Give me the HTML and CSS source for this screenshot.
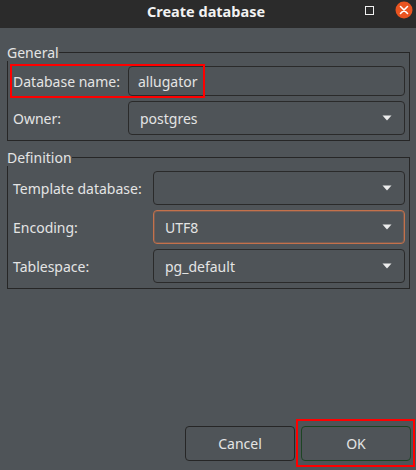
FILE: index.html
```html
<!DOCTYPE html>
<html>
<head>
<meta charset="utf-8">
<link rel="stylesheet" href="styles.css">
</head>
<body>
<div class="window">
  <header class="titlebar">
    <span class="title">Create database</span>
    <div class="controls">
      <span class="maximize"></span>
      <span class="close">
        <svg width="18" height="18" viewBox="0 0 18 18"><circle cx="9" cy="9" r="8.5" fill="#e95420"/><path d="M5.5 5.5 L12.5 12.5 M12.5 5.5 L5.5 12.5" stroke="#fff" stroke-width="1.6" stroke-linecap="round"/></svg>
      </span>
    </div>
  </header>
  <main class="content">
    <fieldset class="group general">
      <legend>General</legend>
      <div class="grid">
        <label class="lbl">Database name:</label>
        <div class="entry">allugator</div>
        <label class="lbl">Owner:</label>
        <div class="combo"><span>postgres</span><svg class="arrow" width="10" height="6" viewBox="0 0 10 6"><path d="M0.5 0.5 H9.5 L5 5.5 Z" fill="#ececec"/></svg></div>
      </div>
    </fieldset>
    <fieldset class="group definition">
      <legend>Definition</legend>
      <div class="grid">
        <label class="lbl">Template database:</label>
        <div class="combo"><span></span><svg class="arrow" width="10" height="6" viewBox="0 0 10 6"><path d="M0.5 0.5 H9.5 L5 5.5 Z" fill="#ececec"/></svg></div>
        <label class="lbl">Encoding:</label>
        <div class="combo focused"><span>UTF8</span><svg class="arrow" width="10" height="6" viewBox="0 0 10 6"><path d="M0.5 0.5 H9.5 L5 5.5 Z" fill="#ececec"/></svg></div>
        <label class="lbl">Tablespace:</label>
        <div class="combo"><span>pg_default</span><svg class="arrow" width="10" height="6" viewBox="0 0 10 6"><path d="M0.5 0.5 H9.5 L5 5.5 Z" fill="#ececec"/></svg></div>
      </div>
    </fieldset>
  </main>
  <footer class="buttons">
    <button class="btn">Cancel</button>
    <button class="btn ok">OK</button>
  </footer>
  <div class="mark mark-name"></div>
  <div class="mark mark-ok"></div>
</div>
</body>
</html>
```

FILE: styles.css
```css
* { box-sizing: border-box; }
html, body { margin: 0; padding: 0; }
body {
  width: 416px;
  height: 470px;
  overflow: hidden;
  background: #4f5458;
  font-family: "Noto Sans", "DejaVu Sans", sans-serif;
  font-size: 14px;
  color: #e4e4e4;
}
.window {
  position: relative;
  width: 416px;
  height: 470px;
  display: flex;
  flex-direction: column;
}
.titlebar {
  position: relative;
  height: 28px;
  background: #2b2b2b;
  display: flex;
  justify-content: center;
  align-items: flex-start;
}
.title {
  font-weight: bold;
  color: #f2f2f2;
  line-height: 22px;
  font-size: 14.5px;
  margin-right: 4px;
}
.controls {
  position: absolute;
  right: 3px;
  top: 1px;
  display: flex;
  align-items: center;
  gap: 21px;
}
.maximize {
  width: 9px;
  height: 9px;
  border: 1px solid #f0f0f0;
}
.close { display: flex; }
.content {
  flex: 1;
  padding: 16px 6px 0 7px;
  display: flex;
  flex-direction: column;
}
.group {
  margin: 0;
  padding: 5px 4px 5px 5px;
  border: 1px solid #262626;
  border-radius: 0;
  min-width: 0;
}
.group legend {
  padding: 0;
  margin-left: -6px;
  line-height: 17px;
  color: #e4e4e4;
}
.definition { margin-top: 8px; }
.grid {
  display: grid;
  column-gap: 7px;
  row-gap: 5px;
  align-items: center;
}
.general .grid { grid-template-columns: 108px 1fr; }
.definition .grid { grid-template-columns: 133px 1fr; }
.lbl { white-space: nowrap; }
.entry {
  height: 30px;
  border: 1px solid #2a2a2a;
  border-radius: 4px;
  padding: 0 9px;
  display: flex;
  align-items: center;
}
.combo {
  height: 34px;
  border: 1px solid #2a2a2a;
  border-radius: 4px;
  padding: 0 12px 0 11px;
  display: flex;
  align-items: center;
  justify-content: space-between;
}
.combo.focused {
  border-color: #c4714b;
  box-shadow: inset 0 0 0 1px rgba(196, 113, 75, 0.35);
}
.buttons {
  display: flex;
  justify-content: flex-end;
  gap: 6px;
  padding: 0 5px 9px 0;
}
.btn {
  width: 110px;
  height: 35px;
  background: transparent;
  border: 1px solid #262626;
  border-radius: 4px;
  font: inherit;
  color: #e4e4e4;
  padding: 0;
}
.btn.ok { border-color: #1d4424; }
.mark {
  position: absolute;
  border: 2px solid #ff0000;
  pointer-events: none;
}
.mark-name { left: 10px; top: 64px; width: 195px; height: 34px; }
.mark-ok { left: 296px; top: 419px; width: 119px; height: 48px; }
```
